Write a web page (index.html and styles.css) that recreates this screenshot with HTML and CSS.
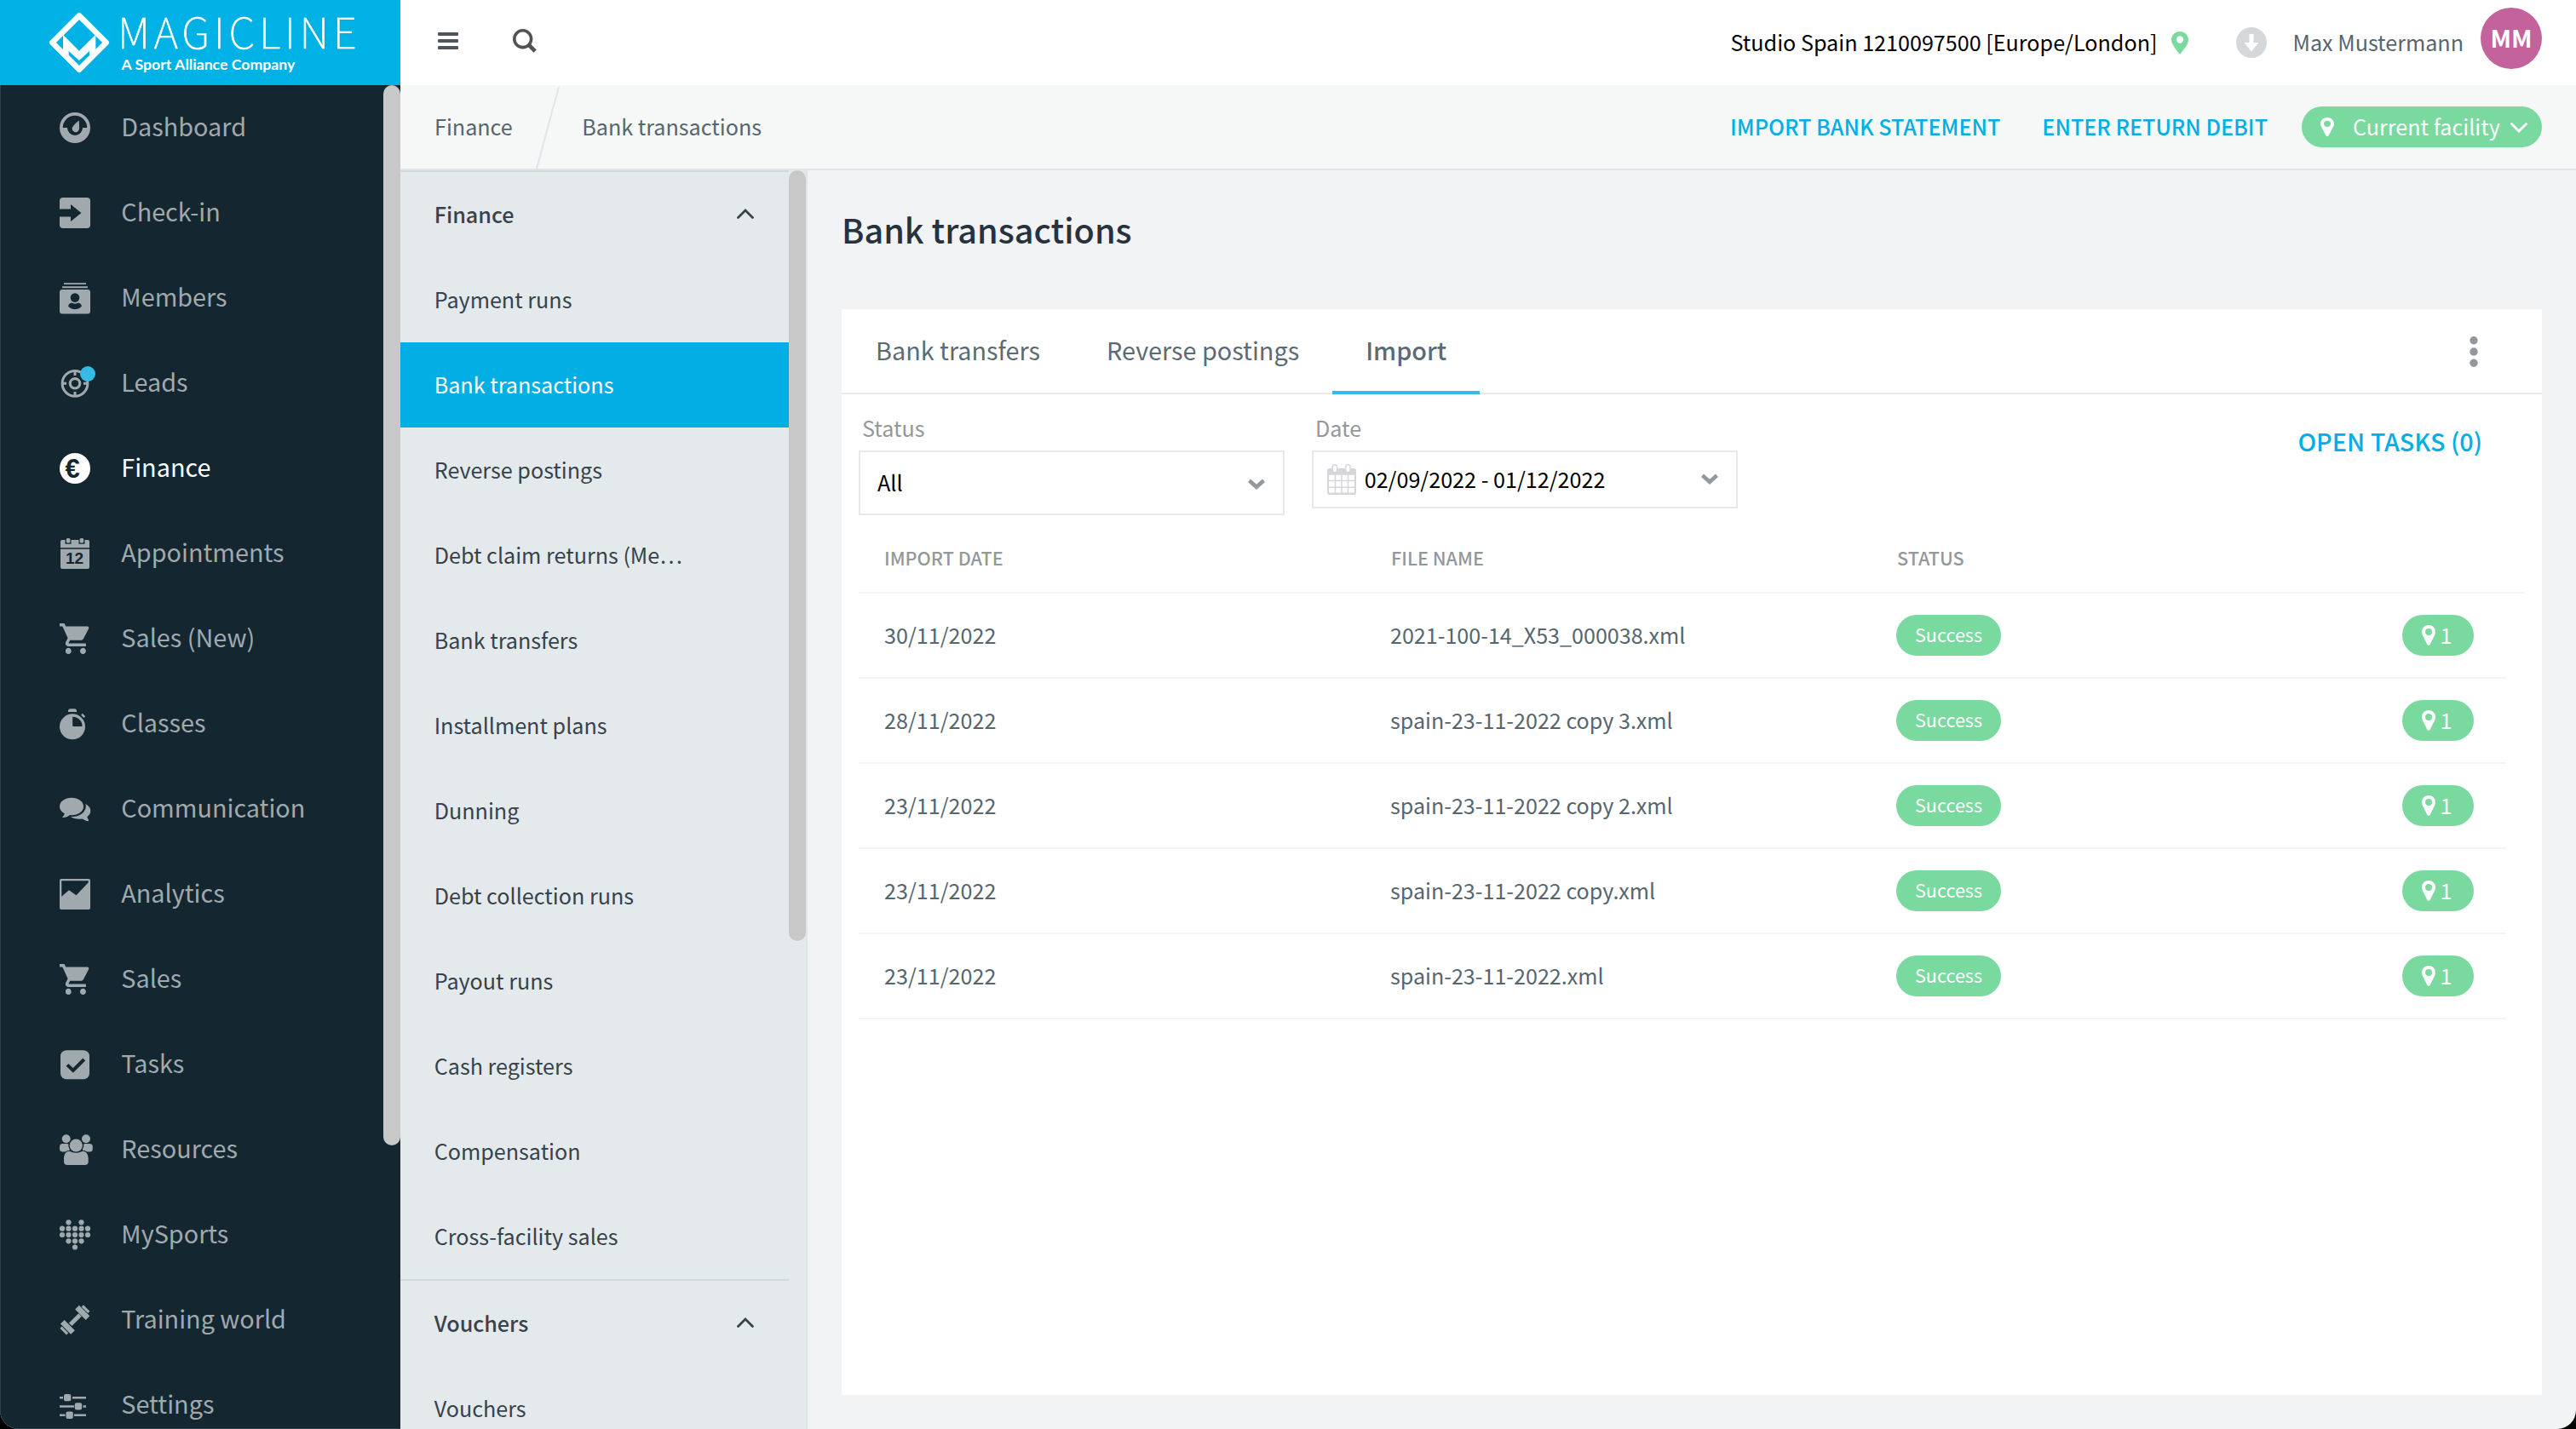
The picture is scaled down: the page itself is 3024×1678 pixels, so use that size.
FILE: index.html
```html
<!DOCTYPE html>
<html lang="en">
<head>
<meta charset="utf-8">
<title>Magicline – Bank transactions</title>
<link rel="stylesheet" href="styles.css">
</head>
<body>
<svg class="defs" aria-hidden="true">
  <symbol id="cart" viewBox="1 2 21 20" preserveAspectRatio="none"><path fill="currentColor" d="M7 18c-1.1 0-1.99.9-1.99 2S5.9 22 7 22s2-.9 2-2-.9-2-2-2zM1 2v2h2l3.6 7.59-1.35 2.45c-.16.28-.25.61-.25.96 0 1.1.9 2 2 2h12v-2H7.42c-.14 0-.25-.11-.25-.25l.03-.12.9-1.63h7.45c.75 0 1.41-.41 1.75-1.03l3.58-6.49c.08-.14.12-.31.12-.48 0-.55-.45-1-1-1H5.21l-.94-2H1zm16 16c-1.1 0-1.99.9-1.99 2s.89 2 1.99 2 2-.9 2-2-.9-2-2-2z"/></symbol>
  <symbol id="pin" viewBox="0 0 20 27" preserveAspectRatio="none"><path fill="currentColor" fill-rule="evenodd" d="M10 0C4.3 0 0 4.3 0 9.8 0 15 5.500 21 10 27c4.500-6 10-12 10-17.200C20 4.300 15.700 0 10 0zm0 5.300a4.200 4.200 0 1 1 0 8.400 4.200 4.200 0 0 1 0-8.400z"/></symbol>
  <symbol id="pin-slim" viewBox="0 0 16 24" preserveAspectRatio="none"><path fill="currentColor" fill-rule="evenodd" d="M8 0C3.500 0 0 3.500 0 8c0 2.500 1 4.200 2 6l4.300 8.800c.7 1.500 2.700 1.500 3.400 0L14 14c1-1.800 2-3.500 2-6 0-4.500-3.500-8-8-8zm0 4a4 4 0 1 1 0 8 4 4 0 0 1 0-8z"/></symbol>
  <symbol id="chevron-up" viewBox="0 0 20 12"><path fill="none" stroke="currentColor" stroke-width="2.800" stroke-linecap="round" d="M1.500 10.500 10 2l8.500 8.500"/></symbol>
  <symbol id="chevron-bold" viewBox="0 0 20 13"><path fill="none" stroke="currentColor" stroke-width="4.600" d="M1.500 2.200 10 9.800l8.500-7.600"/></symbol>
</svg>
<div class="app">
  <aside class="sidebar">
    <div class="logo">
      <svg class="logo-mark" viewBox="0 0 72 72"><path fill="none" stroke="#fff" stroke-width="6.600" stroke-linejoin="round" d="M36 4.300 67.700 36 36 67.700 4.300 36z"/><path fill="#fff" d="M17 26.700 35.900 45.700 55.300 26.700V48L48 54.500V46L35.900 57 23.700 46V54.500L17 48z"/></svg>
      <div class="logo-text"><span class="brand">MAGICLINE</span><span class="tagline">A Sport Alliance Company</span></div>
    </div>
    <div class="nav-wrap">
      <nav class="nav">
        <a><svg viewBox="0 0 36 36"><circle class="f" cx="18" cy="18" r="18"/><path class="k" d="M3.700 18a14.300 14.300 0 0 1 28.600 0H27a9 9 0 0 1-18 0z"/><path class="f" d="M22.500 9.500c.5 4 .7 7 .4 10.500a4.200 4.200 0 1 1-8-2.500C16.500 15 19.500 12 22.500 9.500z"/></svg><span>Dashboard</span></a>
        <a><svg viewBox="0 0 36 36"><rect class="f" width="36" height="36" rx="4"/><path class="k" d="M0 13.500h13V8l12.500 10L13 28v-5.500H0z"/></svg><span>Check-in</span></a>
        <a><svg viewBox="0 0 36 36"><path class="f" d="M5 .3h26v1.800H5zM3 4.300h30v1.900H3z"/><rect class="f" y="8" width="36" height="28.500" rx="3"/><circle class="k" cx="18" cy="17.600" r="5.300"/><path class="k" d="M10.500 26c1-2 3-2.500 4.500-2.300 2 1.200 4 1.200 6 0 1.500-.2 3.500.3 4.500 2.300.5 1 .3 2-.5 2.500-4 3.600-10 3.600-14 0-.8-.5-1-1.500-.5-2.500z"/></svg><span>Members</span></a>
        <a><svg viewBox="0 0 36 36"><circle class="s" cx="18" cy="18.300" r="14.900" stroke-width="3"/><circle class="s" cx="18" cy="18.300" r="5.700" stroke-width="3.200"/><path class="s" stroke-width="3" d="M18 4v5M18 28v5M4 18.300h4M28 18.300h4"/><circle fill="#35bbe6" cx="33" cy="7" r="9"/></svg><span>Leads</span></a>
        <a class="active"><svg viewBox="0 0 36 36"><circle class="f" cx="18" cy="18" r="18"/><text class="glyph" x="6.500" y="29.300" font-size="31">€</text></svg><span>Finance</span></a>
        <a><svg viewBox="0 0 36 36"><path class="f" d="M1 4q0-2 2-2h3.500v4.700h7V2h9v4.700h7V2H33q2 0 2 2v7.200H1zM1 12.700h34V34q0 2-2 2H3q-2 0-2-2z"/><rect class="f" x="7.800" width="4.600" height="5.500" rx="1.500"/><rect class="f" x="23.600" width="4.600" height="5.500" rx="1.500"/><text class="glyph" x="7" y="30.200" font-size="19">12</text></svg><span>Appointments</span></a>
        <a><svg><use href="#cart"/></svg><span>Sales (New)</span></a>
        <a><svg viewBox="0 0 36 36"><circle class="f" cx="15" cy="21.300" r="15"/><path class="k" d="M15.200 9.700V20q0 1 1 1h10.300C27 15 21.500 9.300 15.200 9.700z"/><path class="f" d="M10 4V3q0-2.700 2.700-2.700h4.600Q20 .3 20 3v1z"/><path class="s" stroke-width="2.500" d="M26 6.700l3.300 3.500"/></svg><span>Classes</span></a>
        <a><svg viewBox="0 0 36 36"><ellipse class="f" cx="14" cy="15" rx="14" ry="10.300"/><path class="f" d="M6 22C6 25 4 26.500 3 28c3 .3 7-1 9-3zM30.500 12C38 16 38 23 32.500 27c0 2 1.200 3 1.700 4.200l-.7 1.100c-2.500-.3-5-1.500-6.500-2.800C21 30 16 29.500 13 27 24 27.500 32.500 21 30.500 12z"/></svg><span>Communication</span></a>
        <a><svg viewBox="0 0 36 36"><rect class="f" width="36" height="36" rx="2"/><path class="k" d="M2.300 2.300h31.400v2L19.500 19.200 11 13.200 2.300 20.700z"/></svg><span>Analytics</span></a>
        <a><svg><use href="#cart"/></svg><span>Sales</span></a>
        <a><svg viewBox="0 0 36 36"><rect class="f" x="1" y="1.200" width="34" height="34" rx="7"/><path fill="none" stroke="#142731" stroke-width="4" d="M9 18.300l6.800 6.700L28.800 12"/></svg><span>Tasks</span></a>
        <a><svg viewBox="0 0 36 36"><g class="f"><circle cx="7.700" cy="5.300" r="5"/><circle cx="31" cy="5.300" r="5"/><rect x="0" y="11" width="12" height="9.500" rx="3.500"/><rect x="26.800" y="11" width="12" height="9.500" rx="3.500"/></g><circle class="k" cx="19.300" cy="13" r="9"/><rect class="k" x="4" y="18.700" width="31" height="18" rx="8"/><circle class="f" cx="19.300" cy="13" r="7.600"/><path class="f" d="M11.500 19.800c5 2.600 10.500 2.600 15.500 0 4.500 0 6.700 4 6.700 9.200v3q0 4-4 4H9q-4 0-4-4v-3c0-5.200 2-9.200 6.500-9.200z"/></svg><span>Resources</span></a>
        <a><svg viewBox="0 0 36 36"><g class="f"><circle cx="10.500" cy="3.300" r="3.100"/><circle cx="25.500" cy="3.300" r="3.100"/><circle cx="3" cy="10.700" r="3.100"/><circle cx="10.500" cy="10.700" r="3.100"/><circle cx="18" cy="10.700" r="3.100"/><circle cx="25.500" cy="10.700" r="3.100"/><circle cx="33" cy="10.700" r="3.100"/><circle cx="3" cy="18" r="3.100"/><circle cx="10.500" cy="18" r="3.100"/><circle cx="18" cy="18" r="3.100"/><circle cx="25.500" cy="18" r="3.100"/><circle cx="33" cy="18" r="3.100"/><circle cx="10.500" cy="25.300" r="3.100"/><circle cx="18" cy="25.300" r="3.100"/><circle cx="25.500" cy="25.300" r="3.100"/><circle cx="18" cy="32.500" r="3.100"/></g></svg><span>MySports</span></a>
        <a><svg viewBox="0 0 36 36"><path class="s" stroke-width="5" d="M12.600 23.300 24 11.900"/><path class="s" stroke-width="6.600" d="M20.500 3.200 33 15.600M3.300 20.200 15.500 32.500"/><path class="s" stroke-width="3.200" d="M26.800 1.500l7.600 7.300M1.500 26.700l7.600 7.600"/></svg><span>Training world</span></a>
        <a><svg viewBox="0 0 36 36"><path class="s" stroke-width="2.600" d="M0 9.200h4M15 9.200h16M0 19.500h17M27.500 19.500H31M0 29.800h6.500M17 29.800h14"/><g class="f"><rect x="5" y="5" width="8.300" height="8.300" rx="2"/><rect x="17.800" y="15.300" width="8.300" height="8.300" rx="2"/><rect x="7.500" y="25.600" width="8.300" height="8.300" rx="2"/></g></svg><span>Settings</span></a>
      </nav>
      <div class="thumb thumb-nav"></div>
    </div>
  </aside>

  <div class="page">
    <header class="topbar">
      <svg class="burger" viewBox="0 0 24 20"><path fill="#4d555d" d="M1 0h22q1 0 1 1v2q0 1-1 1H1Q0 4 0 3V1q0-1 1-1zM1 8h22q1 0 1 1v2q0 1-1 1H1q-1 0-1-1V9q0-1 1-1zM1 16h22q1 0 1 1v2q0 1-1 1H1q-1 0-1-1v-2q0-1 1-1z"/></svg>
      <svg class="search" viewBox="0 0 28 28"><circle cx="11.700" cy="11.700" r="9.900" fill="none" stroke="#4f5356" stroke-width="3.600"/><path stroke="#4f5356" stroke-width="4.600" d="M18.500 18.500l7.700 7.700"/></svg>
      <span class="studio">Studio Spain 1210097500 [Europe/London]</span>
      <svg class="studio-pin"><use href="#pin"/></svg>
      <svg class="download" viewBox="0 0 36 36"><circle cx="18" cy="18" r="18" fill="#d5d8db"/><path fill="#fff" d="M15.500 8h5v10h6L18 28.500 9.500 18h6z"/></svg>
      <span class="user">Max Mustermann</span>
      <span class="avatar"><span>MM</span></span>
    </header>

    <div class="crumbs">
      <span class="crumb">Finance</span>
      <svg class="slash" viewBox="0 0 28 98"><path d="M27 2 1 98" stroke="#dde6e9" stroke-width="2"/></svg>
      <span class="crumb">Bank transactions</span>
      <a class="action first">IMPORT BANK STATEMENT</a>
      <a class="action">ENTER RETURN DEBIT</a>
      <span class="facility"><svg class="facility-pin"><use href="#pin-slim"/></svg><span>Current facility</span><svg class="facility-caret" viewBox="0 0 20 12"><path fill="none" stroke="#fff" stroke-width="2.800" stroke-linecap="round" d="M1.500 1.500 10 10l8.500-8.500"/></svg></span>
    </div>

    <div class="body">
      <div class="submenu-wrap">
        <div class="submenu">
          <div class="group"><span>Finance</span><svg><use href="#chevron-up"/></svg></div>
          <a><span>Payment runs</span></a>
          <a class="active"><span>Bank transactions</span></a>
          <a><span>Reverse postings</span></a>
          <a><span>Debt claim returns (Me…</span></a>
          <a><span>Bank transfers</span></a>
          <a><span>Installment plans</span></a>
          <a><span>Dunning</span></a>
          <a><span>Debt collection runs</span></a>
          <a><span>Payout runs</span></a>
          <a><span>Cash registers</span></a>
          <a><span>Compensation</span></a>
          <a><span>Cross-facility sales</span></a>
          <div class="group"><span>Vouchers</span><svg><use href="#chevron-up"/></svg></div>
          <a><span>Vouchers</span></a>
        </div>
        <div class="thumb thumb-sub"></div>
      </div>

      <main class="main">
        <h1>Bank transactions</h1>
        <section class="card">
          <div class="tabs">
            <a><span>Bank transfers</span></a>
            <a><span>Reverse postings</span></a>
            <a class="active"><span>Import</span></a>
            <svg class="more" viewBox="0 0 10 36"><g fill="#92989b"><circle cx="5" cy="4.800" r="4.700"/><circle cx="5" cy="18" r="4.700"/><circle cx="5" cy="31.200" r="4.700"/></g></svg>
          </div>
          <div class="filters">
            <div class="field"><label>Status</label><div class="box tall"><span>All</span><svg class="caret"><use href="#chevron-bold"/></svg></div></div>
            <div class="field"><label>Date</label><div class="box">
              <svg class="cal" viewBox="0 0 34 36"><rect x="1" y="6" width="32" height="29" rx="2" fill="#fff" stroke="#d5d6da" stroke-width="2"/><path fill="#d5d6da" d="M0 12.800V8q0-3 3-3h28q3 0 3 3v4.800z"/><path stroke="#d5d6da" stroke-width="1.500" d="M9.500 12v23M17 12v23M24.500 12v23M1 19.500h32M1 27.300h32"/><path stroke="#d5d6da" stroke-width="2" d="M1 34.500h32"/><rect x="6.200" y=".8" width="5.400" height="9" rx="2.700" fill="#fff" stroke="#d5d6da" stroke-width="1.500"/><rect x="21.700" y=".8" width="5.400" height="9" rx="2.700" fill="#fff" stroke="#d5d6da" stroke-width="1.500"/></svg>
              <span>02/09/2022 - 01/12/2022</span><svg class="caret"><use href="#chevron-bold"/></svg></div></div>
            <a class="open-tasks">OPEN TASKS (0)</a>
          </div>
          <div class="thead"><span>IMPORT DATE</span><span>FILE NAME</span><span>STATUS</span></div>
          <div class="row"><span>30/11/2022</span><span>2021-100-14_X53_000038.xml</span><b class="pill"><i>Success</i></b><b class="count"><svg><use href="#pin-slim"/></svg><i>1</i></b></div>
          <div class="row"><span>28/11/2022</span><span>spain-23-11-2022 copy 3.xml</span><b class="pill"><i>Success</i></b><b class="count"><svg><use href="#pin-slim"/></svg><i>1</i></b></div>
          <div class="row"><span>23/11/2022</span><span>spain-23-11-2022 copy 2.xml</span><b class="pill"><i>Success</i></b><b class="count"><svg><use href="#pin-slim"/></svg><i>1</i></b></div>
          <div class="row"><span>23/11/2022</span><span>spain-23-11-2022 copy.xml</span><b class="pill"><i>Success</i></b><b class="count"><svg><use href="#pin-slim"/></svg><i>1</i></b></div>
          <div class="row"><span>23/11/2022</span><span>spain-23-11-2022.xml</span><b class="pill"><i>Success</i></b><b class="count"><svg><use href="#pin-slim"/></svg><i>1</i></b></div>
        </section>
      </main>
    </div>
  </div>
</div>
</body>
</html>
```
FILE: styles.css
```css
* { box-sizing: border-box; }

html, body { margin: 0; height: 100%; background: #000; }

body {
  font-family: "Noto Sans CJK SC", sans-serif;
  font-size: 25.150px;
  line-height: 36px;
  color: #37424a;
  overflow: hidden;
}

svg { display: block; flex: none; }
.defs { position: absolute; width: 0; height: 0; }
a, span, label { white-space: nowrap; }

.app {
  display: flex;
  width: 3024px;
  height: 1678px;
  overflow: hidden;
  border-radius: 0 0 22px 22px;
  background: #f1f3f5;
}

/* Main navigation */
.sidebar {
  display: flex;
  flex-direction: column;
  width: 470px;
  flex: none;
  background: #142731;
  box-shadow: inset 1px -1px 0 #2f404a;
}

.logo {
  display: flex;
  height: 100px;
  flex: none;
  padding: 14px 0 0 57px;
  background: #00b1e6;
}
.logo-mark { width: 72px; height: 72px; }
.logo-text {
  display: flex;
  flex-direction: column;
  margin-left: 9px;
  color: #fff;
}
.brand {
  font-size: 49px;
  font-weight: 100;
  line-height: 44px;
  letter-spacing: 5.1px;
  -webkit-text-stroke: .7px #fff;
}
.tagline {
  margin-top: 6px;
  padding-left: 4.500px;
  font: 700 17.700px/24px Lato, sans-serif;
}

.nav-wrap { display: flex; flex: 1; min-height: 0; }
.nav { flex: 1; min-width: 0; }
.nav a {
  display: flex;
  align-items: center;
  height: 100px;
  padding-left: 70px;
  font-size: 28.800px;
  color: #a0a9ae;
}
.nav a.active { color: #fff; }
.nav svg { width: 36px; height: 36px; margin-right: 36.300px; overflow: visible; }
.nav span { padding-bottom: 5px; }
.nav .f { fill: currentColor; }
.nav .k, .glyph { fill: #142731; }
.nav .s { fill: none; stroke: currentColor; }
.glyph { font-family: "Liberation Sans", sans-serif; font-weight: 700; }

.thumb { width: 20px; flex: none; border-radius: 10px; background: #c8c8c8; }
.thumb-nav { height: 1245px; }
.thumb-sub { height: 905px; }

/* Top bars */
.page { display: flex; flex-direction: column; flex: 1; min-width: 0; }

.topbar {
  display: flex;
  align-items: center;
  height: 100px;
  flex: none;
  padding: 0 40px 4px 44px;
  background: #fff;
}
.burger { width: 24px; height: 20px; }
.search { width: 28px; height: 28px; margin-left: 63.500px; }
.studio { margin-left: auto; color: #000; padding-top: 2px; }
.studio-pin { width: 20px; height: 27px; margin: 5px 0 0 16px; color: #79d99f; }
.download { width: 36px; height: 36px; margin: 4px 0 0 56px; }
.user { margin-left: 31px; padding-top: 2px; color: #56666f; }
.avatar {
  display: flex;
  align-items: center;
  justify-content: center;
  width: 72px;
  height: 72px;
  margin: -6px 0 0 20px;
  border-radius: 50%;
  background: #c4629b;
  color: #fff;
  font-size: 28.800px;
  font-weight: 700;
}
.avatar span { padding-bottom: 3px; }

.crumbs {
  display: flex;
  align-items: center;
  height: 100px;
  flex: none;
  padding: 0 40px;
  border-bottom: 2px solid #dde6e6;
  background: #f5f8f7;
  color: #56666f;
}
.crumb, .action { padding-bottom: 2px; }
.slash { width: 28px; height: 98px; margin: 0 26.500px 0 27px; }
.action { margin-right: 49px; font-weight: 500; color: #03aee4; }
.action.first { margin-left: auto; }
.action + .facility { margin-left: -9px; }
.facility {
  display: flex;
  align-items: center;
  width: 282px;
  height: 48px;
  padding-left: 22px;
  border-radius: 24px;
  background: #79d99f;
  color: #fff;
}
.facility-pin { width: 16px; height: 22px; margin-right: 22px; }
.facility span { padding-bottom: 2px; }
.facility-caret { width: 20px; height: 12px; margin: 2px 0 0 12px; }

/* Section menu */
.body { display: flex; flex: 1; min-height: 0; }
.submenu-wrap {
  display: flex;
  width: 478px;
  flex: none;
  border-right: 2px solid #dde6e6;
  background: #e4e9ec;
}
.submenu { width: 456px; flex: none; }
.submenu a, .group {
  display: flex;
  align-items: center;
  height: 100px;
  padding-left: 39.700px;
}
.submenu span { padding-bottom: 2px; }
.submenu a.active { background: #03aee4; color: #fff; }
.group {
  justify-content: space-between;
  height: 102px;
  padding-right: 41px;
  border-top: 2px solid #d0dada;
  font-weight: 500;
}
.group svg { width: 20px; height: 12px; margin-bottom: 2px; }

/* Content */
.main { flex: 1; min-width: 0; padding: 40px; }
h1 {
  margin: 0 0 55px;
  height: 68px;
  font-size: 39.600px;
  font-weight: 500;
  line-height: 58px;
  color: #27323d;
}
.card { height: 1275px; background: #fff; }

.tabs {
  display: flex;
  height: 100px;
  padding-left: 1px;
  border-bottom: 2px solid #e8e9ea;
  font-size: 28.800px;
  color: #5b6b72;
}
.tabs a {
  display: flex;
  align-items: center;
  height: 100px;
  padding: 0 39px 4px;
}
.tabs a.active { border-bottom: 4px solid #35bbe6; padding-bottom: 0; font-weight: 500; }
.more { width: 10px; height: 36px; margin: 32px 75px 0 auto; }

.filters { display: flex; gap: 32px; padding: 21px 70px 0 20px; }
.field { width: 500px; }
.field label { display: block; height: 45px; padding-left: 4px; color: #92989b; }
.box {
  display: flex;
  align-items: center;
  height: 68px;
  padding: 0 21px 0 16px;
  border: 2px solid #e8e9e9;
  color: #000;
}
.box.tall { height: 76px; padding-left: 20px; }
.box span { padding-bottom: 2px; }
.box .caret { width: 20px; height: 13px; margin: -2px 0 0 auto; color: #92989b; }
.box.tall .caret { margin-top: 3px; }
.cal { width: 34px; height: 36px; margin-right: 9.700px; }
.open-tasks { margin: 16px 0 0 auto; font-size: 28.800px; font-weight: 500; color: #03aee4; }

.thead, .row {
  display: grid;
  grid-template-columns: 595px 594px 594px auto;
  align-items: center;
  margin: 0 20px;
  padding-left: 30px;
  border-bottom: 2px solid #f3f4f4;
}
.thead {
  height: 92px;
  padding-top: 10px;
  font-size: 21.600px;
  font-weight: 500;
  color: #92989b;
}
.row {
  height: 100px;
  margin-right: 42px;
  grid-template-columns: 595px 594px 594px 84px;
  color: #56666f;
}
.row span { padding-bottom: 2px; }
.row span:nth-child(2) { margin-left: -1px; font-size: 25.100px; }
.pill, .count {
  display: flex;
  align-items: center;
  justify-content: center;
  width: 123px;
  height: 48px;
  border-radius: 24px;
  background: #79d99f;
  color: #fff;
  font-weight: 400;
}
.pill { font-size: 21.600px; margin-left: -1px; }
.row i { font-style: normal; padding-bottom: 2px; }
.count { width: 84px; gap: 6px; padding-right: 3px; margin-left: -1px; }
.count svg { width: 16px; height: 24px; }
```
